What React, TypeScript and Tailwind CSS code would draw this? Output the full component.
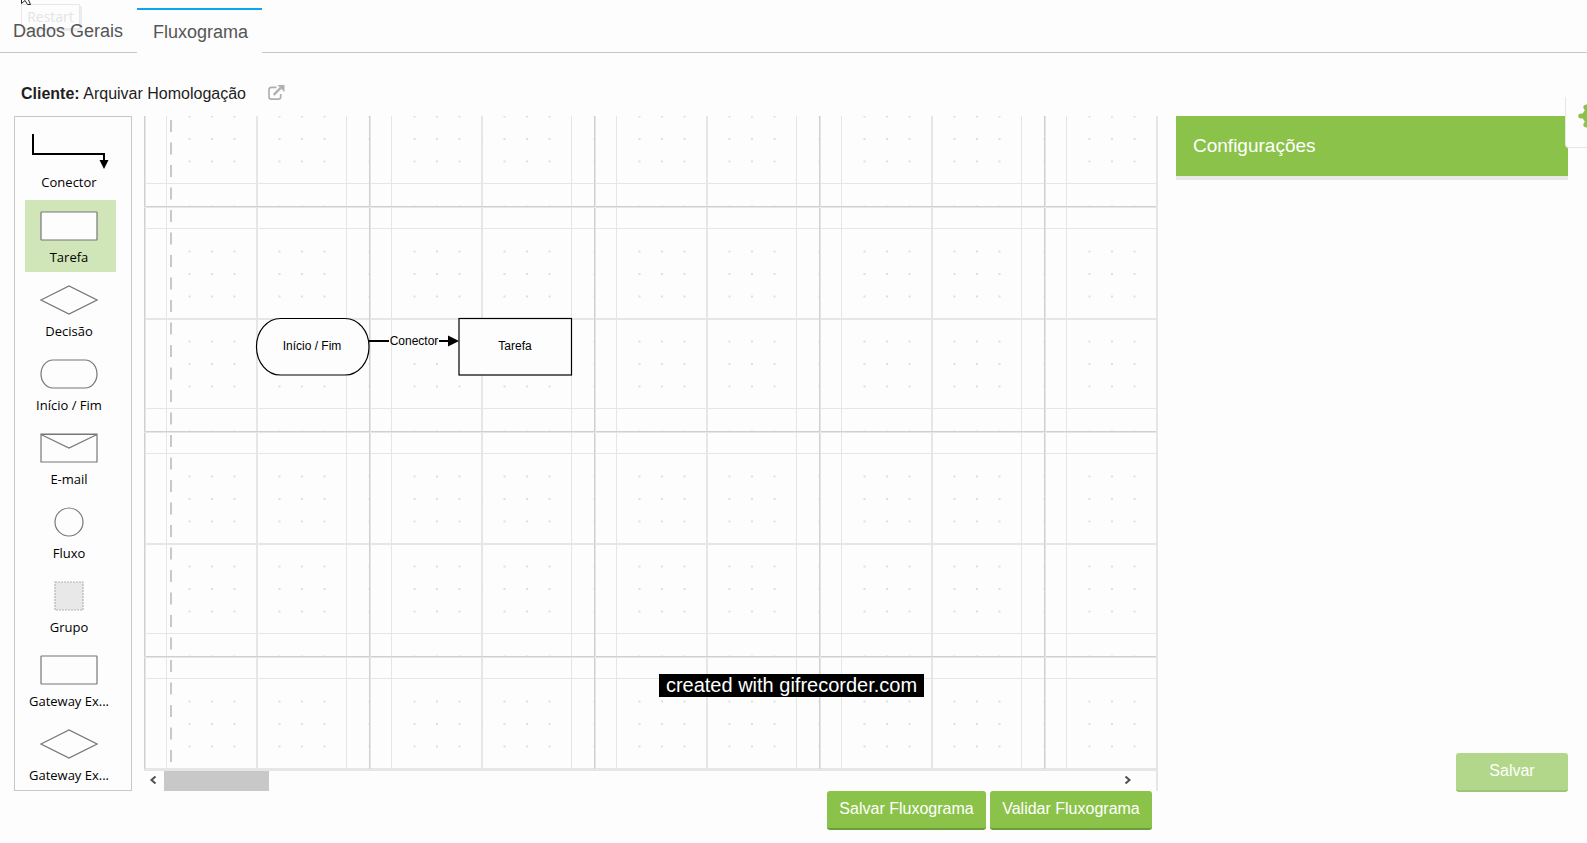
import { ReactNode } from "react";

const ARIAL = "font-['Liberation_Sans',Arial,sans-serif]";
const HUMANIST = "font-['Open_Sans','Noto_Sans',sans-serif]";

type PaletteEntry = { label: string; shape: ReactNode; selected?: boolean };

const rectangle = <rect x="1" y="1" width="56" height="28" rx="0.5" />;
const diamond = <path d="M1 15 29 1 57 15 29 29Z" />;

const palette: PaletteEntry[] = [
  { label: "Tarefa", shape: <rect x="1" y="1" width="56" height="28" rx="0.5" fill="#fdfdfd" />, selected: true },
  { label: "Decisão", shape: diamond },
  { label: "Início / Fim", shape: <rect x="1" y="1" width="56" height="28" rx="12" ry="14" /> },
  { label: "E-mail", shape: <path d="M1 1H57V29H1ZM1 1.5 29 15 57 1.5Z" /> },
  { label: "Fluxo", shape: <circle cx="29" cy="15" r="14" /> },
  {
    label: "Grupo",
    shape: <rect x="15" y="1" width="28" height="28" fill="#e8e8e8" stroke="#b4b4b4" strokeDasharray="2 1" />,
  },
  { label: "Gateway Ex...", shape: rectangle },
  { label: "Gateway Ex...", shape: diamond },
];

function PaletteItem({ label, shape, selected }: PaletteEntry) {
  return (
    <button
      type="button"
      className={`flex h-[72px] w-[91px] shrink-0 flex-col items-start pt-[11px] ${selected ? "bg-[#d0e6b8]" : ""}`}
    >
      <span className="flex w-[88px] flex-col items-center gap-[7px]">
        <svg width="58" height="30" viewBox="0 0 58 30" fill="none" stroke="#777" strokeWidth="1.2">
          {shape}
        </svg>
        <span className="text-[13px] leading-[18px] whitespace-nowrap text-black">{label}</span>
      </span>
    </button>
  );
}

function Palette() {
  return (
    <aside className={`${HUMANIST} flex w-[118px] shrink-0 flex-col gap-[2px] overflow-hidden border border-[#c8c8c8] pt-[9px] pl-[10px]`}>
      <button type="button" className="flex h-[72px] w-[91px] shrink-0 flex-col items-start pt-[6px]">
        <span className="flex w-[88px] flex-col items-center gap-[2px]">
          <svg width="80" height="39" viewBox="0 0 80 39" fill="none">
            <path d="M4 2V22H75V28" stroke="#000" strokeWidth="2" />
            <path d="M70.5 28H79.5L75 37Z" fill="#000" />
          </svg>
          <span className="text-[13px] leading-[18px] text-black">Conector</span>
        </span>
      </button>
      {palette.map((entry, i) => (
        <PaletteItem key={i} {...entry} />
      ))}
    </aside>
  );
}

function Diagram() {
  return (
    <svg className="block h-[654px] w-full">
      <defs>
        <pattern id="dots" x="-0.5" y="-0.5" width="22.5" height="22.5" patternUnits="userSpaceOnUse">
          <rect x="0" y="0" width="2" height="2" fill="#dedede" />
        </pattern>
        <pattern id="lines" x="0" y="90" width="225" height="225" patternUnits="userSpaceOnUse">
          <g shapeRendering="crispEdges">
            <path d="M22.5 0V225M202.5 0V225M0 22.5H225M0 203H225" stroke="#fdfdfd" strokeWidth="5" />
            <path d="M22.5 0V225M202.5 0V225M0 22.5H225M0 202.5H225" stroke="#e6e6e6" />
            <path d="M113 0V225M0 113H225" stroke="#e6e6e6" strokeWidth="2" />
            <path d="M0.5 0V225M0 0.5H225" stroke="#d0d0d0" />
            <path d="M1.5 0V225M0 1.5H225" stroke="#e6e6e6" />
          </g>
        </pattern>
      </defs>
      <rect width="100%" height="100%" fill="url(#dots)" />
      <rect width="100%" height="100%" fill="url(#lines)" />
      <path d="M27 4V648" stroke="#c8c8c8" strokeWidth="2" strokeDasharray="12 10.5" />
      <rect x="112.5" y="202.5" width="112.5" height="56.5" rx="24" ry="28" fill="#fdfdfd" stroke="#000" strokeWidth="1.2" />
      <rect x="315" y="202.5" width="112.5" height="56.5" fill="#fdfdfd" stroke="#000" strokeWidth="1.2" />
      <path d="M225 225H245M295 225H305" stroke="#000" strokeWidth="2" />
      <path d="M304 219.5V230.5L315 225Z" fill="#000" />
      <g fontFamily="'Liberation Sans', Arial, sans-serif" fontSize="12" textAnchor="middle" fill="#000">
        <text x="168" y="234">Início / Fim</text>
        <text x="270" y="229">Conector</text>
        <text x="371" y="234">Tarefa</text>
      </g>
    </svg>
  );
}

function ScrollBar() {
  return (
    <div className="flex h-5 items-stretch">
      <button type="button" aria-label="Rolar para a esquerda" className="flex w-5 items-center justify-center pr-[2px] pb-[2px]">
        <svg width="8" height="8" viewBox="0 0 8 8" fill="none" stroke="#505050" strokeWidth="2">
          <path d="M6.500 0.500 2.500 4 6.500 7.500" />
        </svg>
      </button>
      <div className="flex flex-1">
        <div className="w-[105px] bg-[#c8c8c8]" />
      </div>
      <button type="button" aria-label="Rolar para a direita" className="mr-[18px] flex w-5 items-center justify-center pb-[2px]">
        <svg width="8" height="8" viewBox="0 0 8 8" fill="none" stroke="#505050" strokeWidth="2">
          <path d="M1.500 0.500 5.500 4 1.500 7.500" />
        </svg>
      </button>
    </div>
  );
}

const GREEN_BUTTON = "h-[39px] rounded-[3px] border-b-2 text-[16px] leading-5 text-white pb-[2px]";

export default function App() {
  return (
    <div className={`${ARIAL} relative min-h-screen overflow-hidden bg-[#fdfdfd] text-[#1e1e1e]`}>
      <div className="absolute top-1 left-[21px] h-[25px] w-[59px] border border-[#e8e8e8] shadow-[2px_2px_0_#ececec]">
        <span className={`${HUMANIST} block text-center text-[14px] leading-6 text-[#e4e4e4]`}>Restart</span>
      </div>
      <svg className="absolute top-0 left-5" width="14" height="5" viewBox="0 0 14 5" fill="none" stroke="#222">
        <path d="M1.500 0V3.500L5 0.500L7.500 4.500H10.500L8.500 0" />
      </svg>

      <nav className="relative flex h-[53px] items-end text-[18px] leading-6 text-[#555]">
        <a href="#dados" className="flex h-[45px] w-[137px] items-center border-b border-[#c8c8c8] pt-[2px] pl-[13px]">
          Dados Gerais
        </a>
        <a href="#fluxograma" className="flex h-[45px] w-[125px] items-center border-t-2 border-[#0fa5ee] pl-4">
          Fluxograma
        </a>
        <span className="h-px flex-1 bg-[#c8c8c8]" />
      </nav>

      <header className="flex h-[63px] items-end pb-[10px] pl-[21px] text-[16px] leading-6">
        <p>
          <b>Cliente:</b> Arquivar Homologação
        </p>
        <a href="#abrir" aria-label="Abrir cliente" className="ml-[22px] pb-[6px]">
          <svg width="17" height="15" viewBox="0 0 18 16" fill="none" stroke="#b0b0b0" strokeWidth="1.8">
            <path d="M9 2.500H3.500Q1 2.500 1 5V12.500Q1 15 3.500 15H11Q13.500 15 13.500 12.500V9.500" />
            <path d="M6 10.500 14 2.500" strokeWidth="2.4" />
            <path d="M10 0H17.500V7.500Z" fill="#b0b0b0" stroke="none" />
          </svg>
        </a>
      </header>

      <main className="flex pr-[19px] pl-[14px]">
        <Palette />
        <section className="ml-3 min-w-0 flex-1">
          <div className="border-r-2 border-[#e6e6e6]">
            <div className="border-b-2 border-[#e6e6e6]">
              <div className="h-[653px] overflow-hidden">
                <Diagram />
              </div>
            </div>
            <ScrollBar />
          </div>
        </section>
        <aside className="ml-[18px] flex w-[392px] shrink-0 flex-col">
          <h2 className="flex h-16 items-center border-b-4 border-[#e8e8e8] bg-[#8bc34a] pl-[17px] text-[19px] text-white">
            Configurações
          </h2>
        </aside>
      </main>

      <footer className="flex items-start justify-between pr-[19px]">
        <div className="flex flex-1 justify-end gap-1 pr-6">
          <button type="button" className={`${GREEN_BUTTON} w-[159px] border-[#689f38] bg-[#8bc34a]`}>
            Salvar Fluxograma
          </button>
          <button type="button" className={`${GREEN_BUTTON} w-[162px] border-[#689f38] bg-[#8bc34a]`}>
            Validar Fluxograma
          </button>
        </div>
        <div className="flex w-[392px] justify-end">
          <button type="button" className={`${GREEN_BUTTON} -mt-[38px] w-28 border-[#9cc57c] bg-[#b2d78a]`}>
            Salvar
          </button>
        </div>
      </footer>

      <button
        type="button"
        aria-label="Opções"
        className="absolute top-[97px] right-0 h-[51px] w-[22px] overflow-hidden rounded-bl-[4px] border-b border-l border-[#e6e6e6] bg-[#fdfdfd]"
      >
        <svg className="absolute top-[6px] left-3" width="26" height="26" viewBox="0 0 26 26" fill="#8bc34a">
          <circle cx="13" cy="13" r="8.5" />
          <path
            d="M2.800 13H23.200M7.900 4.200 18.100 21.800M18.100 4.200 7.900 21.800"
            stroke="#8bc34a"
            strokeWidth="5"
            strokeLinecap="round"
          />
        </svg>
      </button>

      <div className="absolute inset-x-0 top-[674px] flex justify-center pr-1">
        <span className="h-[23px] bg-black px-[7px] text-[20px] leading-[23px] whitespace-nowrap text-white">
          created with gifrecorder.com
        </span>
      </div>
    </div>
  );
}
